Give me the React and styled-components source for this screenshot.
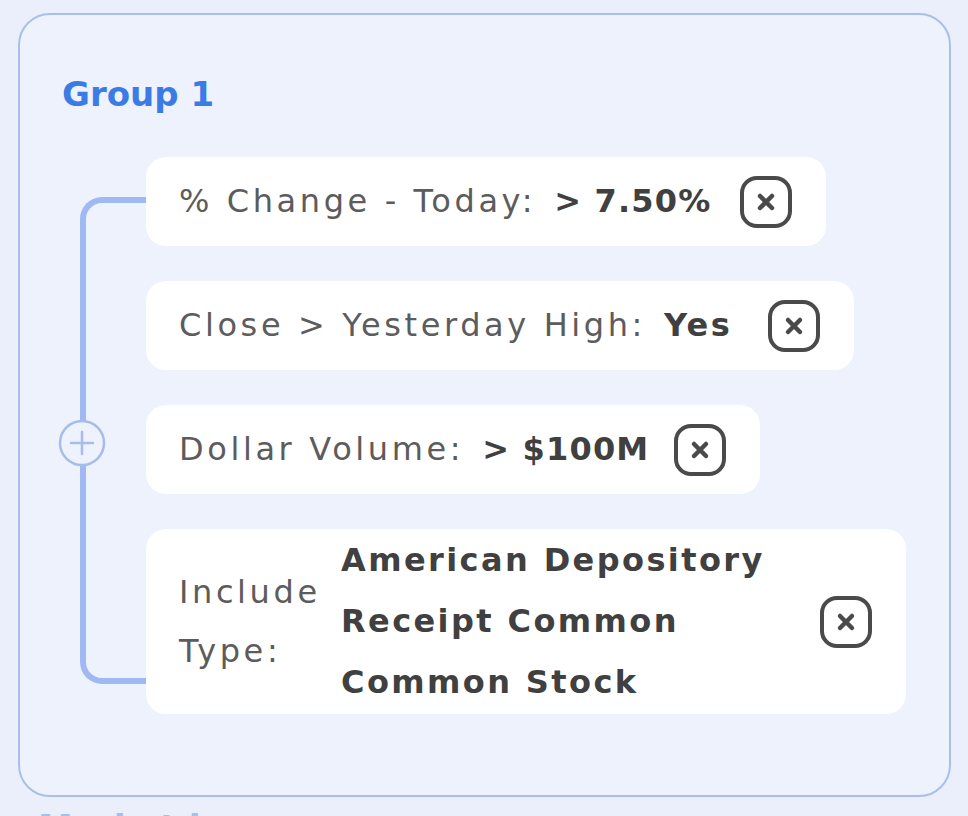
import React from "react"
import styled, { createGlobalStyle } from "styled-components"

const GlobalStyle = createGlobalStyle`
  html, body {
    margin: 0;
    padding: 0;
    background: #eaeffb;
    font-family: "DejaVu Sans", "Noto Sans", sans-serif;
    overflow: hidden;
  }
`

// gap = space before the remove button, numeric values are set a little tighter
const filters = [
  { label: "% Change - Today:", value: "> 7.50%", gap: 27, tight: true },
  { label: "Close > Yesterday High:", value: "Yes", gap: 35 },
  { label: "Dollar Volume:", value: "> $100M", gap: 24, tight: true },
  {
    label: "Include Type:",
    value: ["American Depository", "Receipt Common", "Common Stock"],
    gap: 54,
    multi: true,
  },
]

const RemoveIcon = () => (
  <svg width="54" height="54" viewBox="0 0 54 54" fill="none">
    <rect x="3" y="3" width="48" height="48" rx="15" stroke="#4a4a4a" strokeWidth="4" />
    <path d="M21 21 L33 33 M33 21 L21 33" stroke="#4a4a4a" strokeWidth="4.5" strokeLinecap="round" />
  </svg>
)

const PlusIcon = () => (
  <svg width="50" height="50" viewBox="0 0 50 50" fill="none">
    <circle cx="25" cy="25" r="22" fill="#eef2fd" stroke="#a6bdeb" strokeWidth="2.5" />
    <path d="M25 14 V36 M14 25 H36" stroke="#a6bdeb" strokeWidth="2.5" strokeLinecap="round" />
  </svg>
)

const App = () => {
  return (
    <>
      <GlobalStyle />
      <Page>
        <Card>
          <Title>Group 1</Title>
          <Tree>
            <Rail>
              <Branch />
              <PlusHolder>
                <PlusIcon />
              </PlusHolder>
            </Rail>
            <Rows>
              {filters.map((f) => (
                <Row key={f.label}>
                  <Label multi={f.multi}>{f.label}</Label>
                  {f.multi ? (
                    <Value multi>
                      {f.value.map((line) => (
                        <div key={line}>{line}</div>
                      ))}
                    </Value>
                  ) : (
                    <Value tight={f.tight}>{f.value}</Value>
                  )}
                  <Remove gap={f.gap}>
                    <RemoveIcon />
                  </Remove>
                </Row>
              ))}
            </Rows>
          </Tree>
        </Card>
        <Below>Market hours</Below>
      </Page>
    </>
  )
}
export default App

const Page = styled.div`
  width: 968px;
  height: 816px;
  padding: 13px 0 0 18px;
  box-sizing: border-box;
`
const Card = styled.div`
  width: 933px;
  height: 784px;
  box-sizing: border-box;
  border: 2.5px solid #a9bfe9;
  border-radius: 32px;
  background: #eef2fd;
  padding: 58px 0 0 42px;
`
const Title = styled.div`
  color: #3b7be6;
  font-size: 34px;
  font-weight: 700;
  line-height: 42px;
`
const Tree = styled.div`
  display: flex;
  margin-top: 42px;
  margin-left: 18px;
`
const Rail = styled.div`
  position: relative;
  width: 66px;
  flex-shrink: 0;
`
const Branch = styled.div`
  position: absolute;
  left: 0;
  right: 0;
  top: 40px;
  bottom: 30px;
  border: 6px solid #9fbaf3;
  border-right: none;
  border-radius: 22px 0 0 22px;
`
const PlusHolder = styled.div`
  position: absolute;
  left: -23px;
  top: 261px;
  width: 50px;
  height: 50px;
  display: flex;
`
const Rows = styled.div`
  display: flex;
  flex-direction: column;
  align-items: flex-start;
  gap: 35px;
`
const Row = styled.div`
  display: flex;
  align-items: center;
  min-height: 89px;
  padding: 0 33px;
  background: #ffffff;
  border-radius: 20px;
  box-sizing: border-box;
`
const Label = styled.div`
  color: #5c5c5c;
  font-size: 32px;
  letter-spacing: 3.6px;
  line-height: ${(p) => (p.multi ? "59px" : "61px")};
  width: ${(p) => (p.multi ? "158px" : "auto")};
  white-space: ${(p) => (p.multi ? "normal" : "nowrap")};
`
const Value = styled.div`
  color: #404040;
  font-size: 32px;
  font-weight: 700;
  letter-spacing: ${(p) => (p.tight ? "1.2px" : "2.4px")};
  line-height: 61px;
  padding: ${(p) => (p.multi ? "1px 0" : "0")};
  margin-left: ${(p) => (p.multi ? "4px" : "18px")};
  white-space: nowrap;
`
const Remove = styled.div`
  display: flex;
  margin-left: ${(p) => p.gap}px;
`
const Below = styled.div`
  margin: 10px 0 0 20px;
  color: #a9bfe9;
  font-size: 35px;
  font-weight: 700;
  line-height: 42px;
`
